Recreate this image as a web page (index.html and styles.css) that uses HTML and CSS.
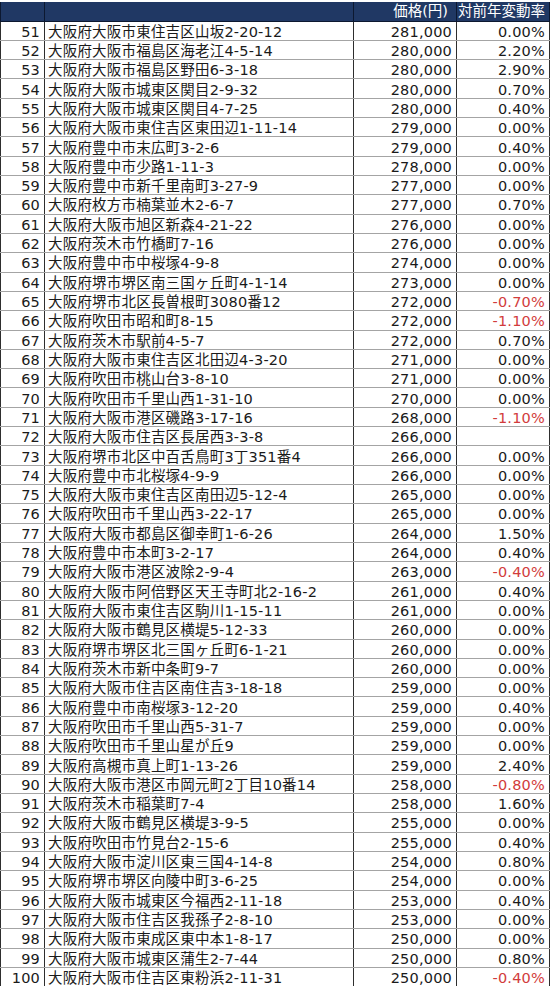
FILE: index.html
```html
<!DOCTYPE html>
<html lang="ja">
<head>
<meta charset="utf-8">
<link rel="stylesheet" href="styles.css">
</head>
<body>
<table class="tbl">
<colgroup><col class="c-no"><col class="c-addr"><col class="c-price"><col class="c-rate"></colgroup>
<thead><tr><th></th><th></th><th class="h-price">価格(円)</th><th>対前年変動率</th></tr></thead>
<tbody>
<tr><td class="num">51</td><td class="addr">大阪府大阪市東住吉区山坂2-20-12</td><td class="num">281,000</td><td class="num">0.00%</td></tr>
<tr><td class="num">52</td><td class="addr">大阪府大阪市福島区海老江4-5-14</td><td class="num">280,000</td><td class="num">2.20%</td></tr>
<tr><td class="num">53</td><td class="addr">大阪府大阪市福島区野田6-3-18</td><td class="num">280,000</td><td class="num">2.90%</td></tr>
<tr><td class="num">54</td><td class="addr">大阪府大阪市城東区関目2-9-32</td><td class="num">280,000</td><td class="num">0.70%</td></tr>
<tr><td class="num">55</td><td class="addr">大阪府大阪市城東区関目4-7-25</td><td class="num">280,000</td><td class="num">0.40%</td></tr>
<tr><td class="num">56</td><td class="addr">大阪府大阪市東住吉区東田辺1-11-14</td><td class="num">279,000</td><td class="num">0.00%</td></tr>
<tr><td class="num">57</td><td class="addr">大阪府豊中市末広町3-2-6</td><td class="num">279,000</td><td class="num">0.40%</td></tr>
<tr><td class="num">58</td><td class="addr">大阪府豊中市少路1-11-3</td><td class="num">278,000</td><td class="num">0.00%</td></tr>
<tr><td class="num">59</td><td class="addr">大阪府豊中市新千里南町3-27-9</td><td class="num">277,000</td><td class="num">0.00%</td></tr>
<tr><td class="num">60</td><td class="addr">大阪府枚方市楠葉並木2-6-7</td><td class="num">277,000</td><td class="num">0.70%</td></tr>
<tr><td class="num">61</td><td class="addr">大阪府大阪市旭区新森4-21-22</td><td class="num">276,000</td><td class="num">0.00%</td></tr>
<tr><td class="num">62</td><td class="addr">大阪府茨木市竹橋町7-16</td><td class="num">276,000</td><td class="num">0.00%</td></tr>
<tr><td class="num">63</td><td class="addr">大阪府豊中市中桜塚4-9-8</td><td class="num">274,000</td><td class="num">0.00%</td></tr>
<tr><td class="num">64</td><td class="addr">大阪府堺市堺区南三国ヶ丘町4-1-14</td><td class="num">273,000</td><td class="num">0.00%</td></tr>
<tr><td class="num">65</td><td class="addr">大阪府堺市北区長曽根町3080番12</td><td class="num">272,000</td><td class="num neg">-0.70%</td></tr>
<tr><td class="num">66</td><td class="addr">大阪府吹田市昭和町8-15</td><td class="num">272,000</td><td class="num neg">-1.10%</td></tr>
<tr><td class="num">67</td><td class="addr">大阪府茨木市駅前4-5-7</td><td class="num">272,000</td><td class="num">0.70%</td></tr>
<tr><td class="num">68</td><td class="addr">大阪府大阪市東住吉区北田辺4-3-20</td><td class="num">271,000</td><td class="num">0.00%</td></tr>
<tr><td class="num">69</td><td class="addr">大阪府吹田市桃山台3-8-10</td><td class="num">271,000</td><td class="num">0.00%</td></tr>
<tr><td class="num">70</td><td class="addr">大阪府吹田市千里山西1-31-10</td><td class="num">270,000</td><td class="num">0.00%</td></tr>
<tr><td class="num">71</td><td class="addr">大阪府大阪市港区磯路3-17-16</td><td class="num">268,000</td><td class="num neg">-1.10%</td></tr>
<tr><td class="num">72</td><td class="addr">大阪府大阪市住吉区長居西3-3-8</td><td class="num">266,000</td><td class="num"></td></tr>
<tr><td class="num">73</td><td class="addr">大阪府堺市北区中百舌鳥町3丁351番4</td><td class="num">266,000</td><td class="num">0.00%</td></tr>
<tr><td class="num">74</td><td class="addr">大阪府豊中市北桜塚4-9-9</td><td class="num">266,000</td><td class="num">0.00%</td></tr>
<tr><td class="num">75</td><td class="addr">大阪府大阪市東住吉区南田辺5-12-4</td><td class="num">265,000</td><td class="num">0.00%</td></tr>
<tr><td class="num">76</td><td class="addr">大阪府吹田市千里山西3-22-17</td><td class="num">265,000</td><td class="num">0.00%</td></tr>
<tr><td class="num">77</td><td class="addr">大阪府大阪市都島区御幸町1-6-26</td><td class="num">264,000</td><td class="num">1.50%</td></tr>
<tr><td class="num">78</td><td class="addr">大阪府豊中市本町3-2-17</td><td class="num">264,000</td><td class="num">0.40%</td></tr>
<tr><td class="num">79</td><td class="addr">大阪府大阪市港区波除2-9-4</td><td class="num">263,000</td><td class="num neg">-0.40%</td></tr>
<tr><td class="num">80</td><td class="addr">大阪府大阪市阿倍野区天王寺町北2-16-2</td><td class="num">261,000</td><td class="num">0.40%</td></tr>
<tr><td class="num">81</td><td class="addr">大阪府大阪市東住吉区駒川1-15-11</td><td class="num">261,000</td><td class="num">0.00%</td></tr>
<tr><td class="num">82</td><td class="addr">大阪府大阪市鶴見区横堤5-12-33</td><td class="num">260,000</td><td class="num">0.00%</td></tr>
<tr><td class="num">83</td><td class="addr">大阪府堺市堺区北三国ヶ丘町6-1-21</td><td class="num">260,000</td><td class="num">0.00%</td></tr>
<tr><td class="num">84</td><td class="addr">大阪府茨木市新中条町9-7</td><td class="num">260,000</td><td class="num">0.00%</td></tr>
<tr><td class="num">85</td><td class="addr">大阪府大阪市住吉区南住吉3-18-18</td><td class="num">259,000</td><td class="num">0.00%</td></tr>
<tr><td class="num">86</td><td class="addr">大阪府豊中市南桜塚3-12-20</td><td class="num">259,000</td><td class="num">0.40%</td></tr>
<tr><td class="num">87</td><td class="addr">大阪府吹田市千里山西5-31-7</td><td class="num">259,000</td><td class="num">0.00%</td></tr>
<tr><td class="num">88</td><td class="addr">大阪府吹田市千里山星が丘9</td><td class="num">259,000</td><td class="num">0.00%</td></tr>
<tr><td class="num">89</td><td class="addr">大阪府高槻市真上町1-13-26</td><td class="num">259,000</td><td class="num">2.40%</td></tr>
<tr><td class="num">90</td><td class="addr">大阪府大阪市港区市岡元町2丁目10番14</td><td class="num">258,000</td><td class="num neg">-0.80%</td></tr>
<tr><td class="num">91</td><td class="addr">大阪府茨木市稲葉町7-4</td><td class="num">258,000</td><td class="num">1.60%</td></tr>
<tr><td class="num">92</td><td class="addr">大阪府大阪市鶴見区横堤3-9-5</td><td class="num">255,000</td><td class="num">0.00%</td></tr>
<tr><td class="num">93</td><td class="addr">大阪府吹田市竹見台2-15-6</td><td class="num">255,000</td><td class="num">0.40%</td></tr>
<tr><td class="num">94</td><td class="addr">大阪府大阪市淀川区東三国4-14-8</td><td class="num">254,000</td><td class="num">0.80%</td></tr>
<tr><td class="num">95</td><td class="addr">大阪府堺市堺区向陵中町3-6-25</td><td class="num">254,000</td><td class="num">0.00%</td></tr>
<tr><td class="num">96</td><td class="addr">大阪府大阪市城東区今福西2-11-18</td><td class="num">253,000</td><td class="num">0.40%</td></tr>
<tr><td class="num">97</td><td class="addr">大阪府大阪市住吉区我孫子2-8-10</td><td class="num">253,000</td><td class="num">0.00%</td></tr>
<tr><td class="num">98</td><td class="addr">大阪府大阪市東成区東中本1-8-17</td><td class="num">250,000</td><td class="num">0.00%</td></tr>
<tr><td class="num">99</td><td class="addr">大阪府大阪市城東区蒲生2-7-44</td><td class="num">250,000</td><td class="num">0.80%</td></tr>
<tr><td class="num">100</td><td class="addr">大阪府大阪市住吉区東粉浜2-11-31</td><td class="num">250,000</td><td class="num neg">-0.40%</td></tr>
</tbody>
</table>
</body>
</html>
```
FILE: styles.css
```css
html, body {
  margin: 0;
  padding: 0;
  background: #ffffff;
}
.tbl {
  border-collapse: collapse;
  table-layout: fixed;
  width: 549px;
  color: #1a1a1a;
  font-family: "DejaVu Sans", "Noto Sans CJK JP", sans-serif;
  font-size: 14.5px;
  letter-spacing: 0.2px;
}
.c-no { width: 44px; }
.c-addr { width: 309px; }
.c-price { width: 103px; }
.c-rate { width: 93px; }
.tbl thead th {
  height: 20px;
  padding: 0 4px 0 0;
  background: #203864;
  color: #ffffff;
  font-weight: normal;
  line-height: 16px;
  white-space: nowrap;
  text-align: right;
  letter-spacing: 0;
  border-left: 1px solid #0c1830;
  border-right: 1px solid #0c1830;
  border-bottom: 1px solid #0c1830;
  border-top: 2px solid #ffffff;
  box-sizing: border-box;
}
.tbl thead th.h-price { padding-right: 8px; }
.tbl tbody td {
  height: 19.32px;
  padding: 2px 4px 0 3px;
  line-height: 16px;
  white-space: nowrap;
  overflow: hidden;
  border-left: 1px solid #2e2e2e;
  border-right: 1px solid #2e2e2e;
  border-bottom: 1px solid #a4a4a4;
  box-sizing: border-box;
  vertical-align: middle;
}
.num { text-align: right; }
.addr { text-align: left; }
.neg { color: #d23c3c; }
```
